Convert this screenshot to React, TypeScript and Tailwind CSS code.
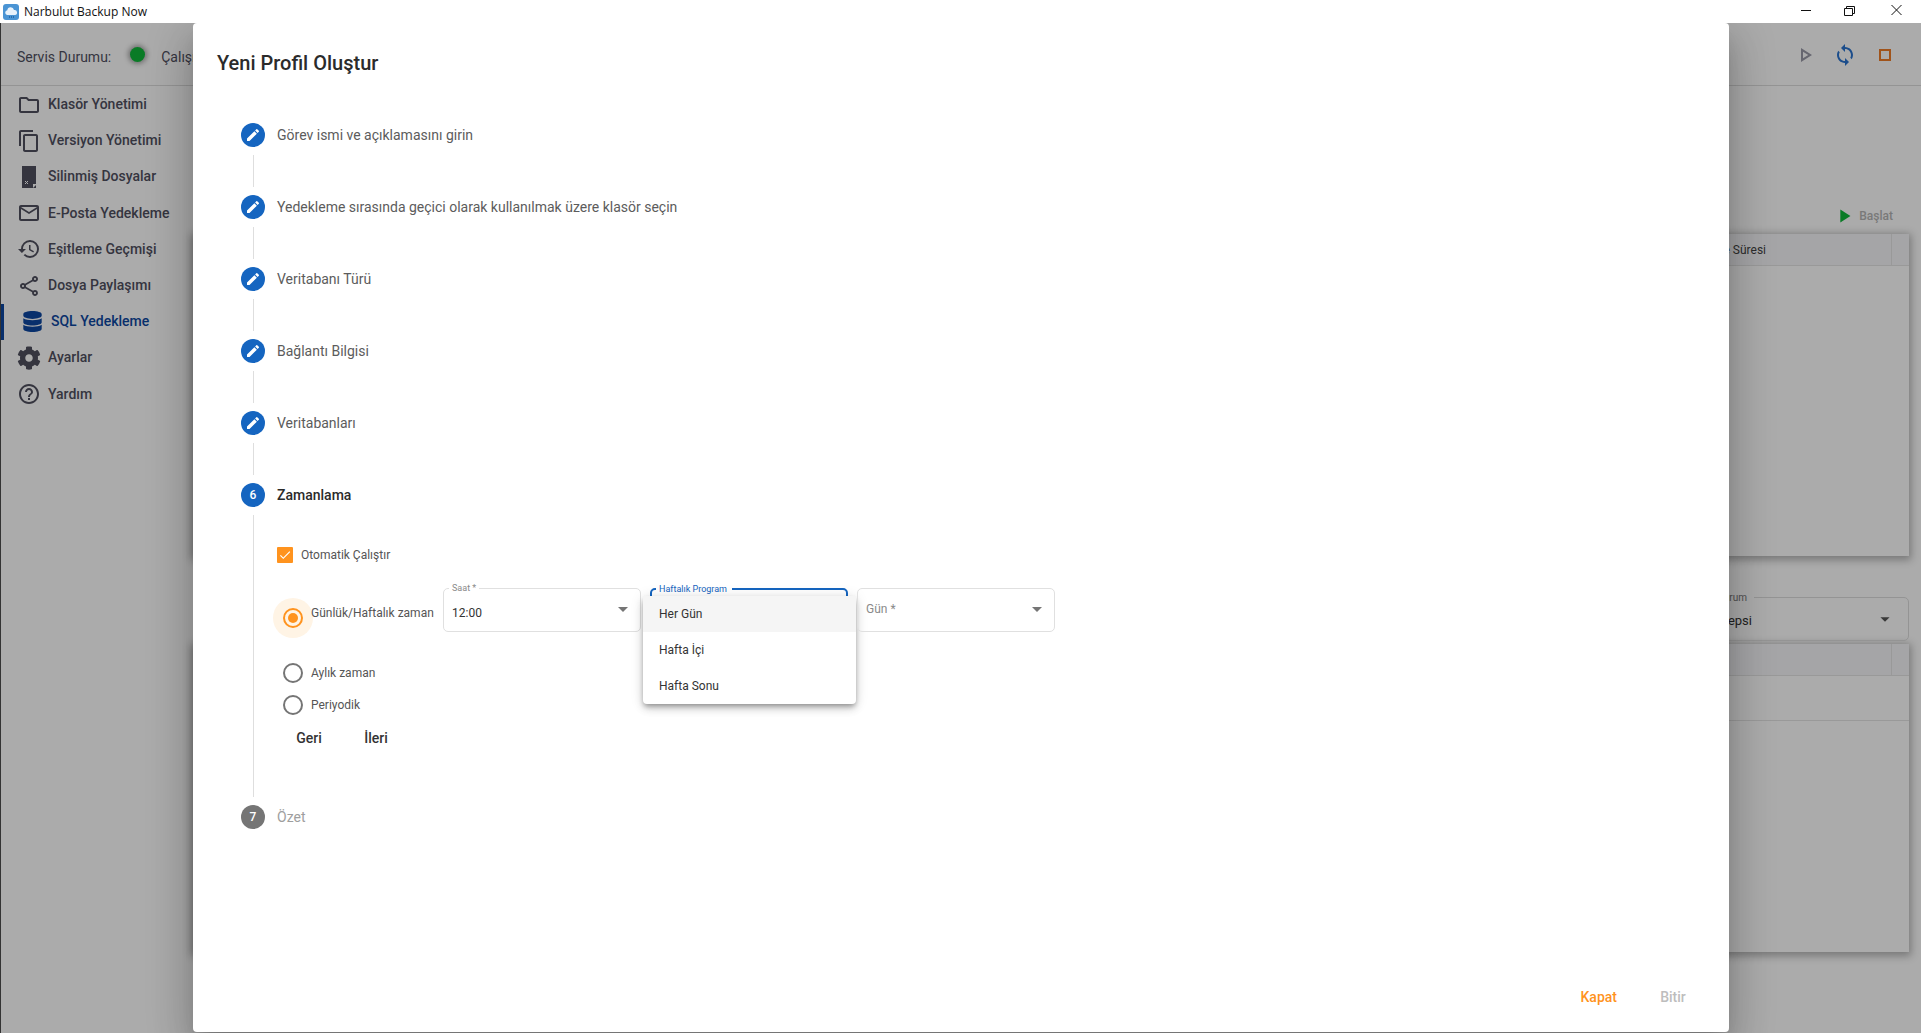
import { FaCog, FaDatabase } from "react-icons/fa";
import {
  MdArrowDropDown,
  MdCheck,
  MdContentCopy,
  MdEdit,
  MdHelpOutline,
  MdHistory,
  MdMailOutline,
  MdOutlineFolder,
  MdOutlineShare,
  MdPlayArrow,
  MdSync,
} from "react-icons/md";

function TrashFile({ className }: { className?: string }) {
  return (
    <svg viewBox="0 0 24 24" className={className}>
      <path d="M5 1h14v22H5z" fill="currentColor" />
      <path d="M8 16l3 3m0-3l-3 3" stroke="#fff" strokeWidth="1" fill="none" />
      <path d="M16 23v-4h3v1z" fill="#fff" />
    </svg>
  );
}

const NAV = [
  { label: "Klasör Yönetimi", icon: MdOutlineFolder },
  { label: "Versiyon Yönetimi", icon: MdContentCopy },
  { label: "Silinmiş Dosyalar", icon: TrashFile },
  { label: "E-Posta Yedekleme", icon: MdMailOutline },
  { label: "Eşitleme Geçmişi", icon: MdHistory },
  { label: "Dosya Paylaşımı", icon: MdOutlineShare },
  { label: "SQL Yedekleme", icon: FaDatabase, active: true },
  { label: "Ayarlar", icon: FaCog },
  { label: "Yardım", icon: MdHelpOutline },
];

const DONE_STEPS = [
  "Görev ismi ve açıklamasını girin",
  "Yedekleme sırasında geçici olarak kullanılmak üzere klasör seçin",
  "Veritabanı Türü",
  "Bağlantı Bilgisi",
  "Veritabanları",
];

function TitleBar() {
  return (
    <div className="flex h-[23px] shrink-0 items-center bg-white pl-[3px] [font-family:'Open_Sans',sans-serif] text-[12px] text-[#111]">
      <svg viewBox="0 0 16 16" className="size-4 shrink-0">
        <rect width="16" height="16" rx="3" fill="#4a94d4" />
        <path d="M4 11a2.4 2.4 0 0 1 .3-4.7A3.4 3.4 0 0 1 11 6a2.5 2.5 0 0 1 1 5z" fill="#e8f2fb" />
        <path d="M6 13h5" stroke="#1f5f9e" strokeWidth="1.4" strokeDasharray="1 1" />
      </svg>
      <span className="ml-[5px]">Narbulut Backup Now</span>
      <div className="ml-auto flex items-center">
        <svg viewBox="0 0 45 23" className="h-[23px] w-[45px]">
          <path d="M20 10.5h10" stroke="#111" fill="none" />
        </svg>
        <svg viewBox="0 0 45 23" className="h-[23px] w-[45px]">
          <path d="M18.5 8.5h8v7h-8zM20.5 8.5v-2h8v7h-2" stroke="#111" fill="none" />
        </svg>
        <svg viewBox="0 0 45 23" className="h-[23px] w-[50px]">
          <path d="M18 5l10 10M28 5L18 15" stroke="#111" fill="none" />
        </svg>
      </div>
    </div>
  );
}

function Sidebar() {
  return (
    <aside className="w-[192px] shrink-0 pt-[0.5px]">
      {NAV.map((item) => {
        const Icon = item.icon;
        return (
          <div
            key={item.label}
            className={
              item.active
                ? "flex h-[36.2px] items-center border-l-[3px] border-[#0d47a1] pl-[18px] text-[#0d47a1]"
                : "flex h-[36.2px] items-center pl-[16px] text-[#50505f]"
            }
          >
            <Icon className={item.active ? "size-[21px] shrink-0" : "size-[24px] shrink-0"} />
            <span className={item.active ? "ml-[8px] text-[14px] font-medium" : "ml-[7px] text-[14px] font-medium"}>
              {item.label}
            </span>
          </div>
        );
      })}
    </aside>
  );
}

function BackgroundApp() {
  return (
    <div className="flex h-full flex-col bg-white">
      <header className="flex h-[63px] shrink-0 items-center border-b border-[#ddd] pl-[16px] pr-[24px] pt-[3px] text-[14px] text-[#50505f]">
        <span className="mt-[3px]">Servis Durumu:</span>
        <span className="-mt-[2px] ml-[19px] size-[15px] rounded-full bg-[#0fb83a] shadow-[0_0_5px_2px_rgba(0,0,0,0.35)]" />
        <span className="ml-[16px] mt-[3px]">Çalışıyor</span>
        <div className="-mt-[1px] ml-auto flex items-center gap-[16px]">
          <svg viewBox="0 0 24 24" className="size-6 text-[#9a9aa8]">
            <path fill="currentColor" d="M10 8.64 15.27 12 10 15.36V8.64M8 5v14l11-7L8 5z" />
          </svg>
          <MdSync className="size-6 text-[#2a74d0]" />
          <svg viewBox="0 0 24 24" className="size-6 text-[#ef7c28]">
            <path fill="currentColor" d="M16 8v8H8V8h8m2-2H6v12h12V6z" />
          </svg>
        </div>
      </header>
      <div className="flex min-h-0 flex-1">
        <Sidebar />
        <main className="flex flex-1 flex-col pr-[12px] pt-[119px]">
          <div className="flex items-center justify-end pr-[16px] text-[12px] text-[#b5b5b5]">
            <MdPlayArrow className="mr-[4px] size-[22px] text-[#0fb83a]" />
            <span className="font-medium">Başlat</span>
          </div>
          <section className="mt-[7px] h-[322px] bg-white shadow-[0_2px_8px_2px_rgba(0,0,0,0.3)]">
            <div className="flex h-[32px] items-center justify-end border-b border-[#e4e4e4] bg-[#f7f7fa] text-[12px] text-[#444]">
              <span>Yedekleme Süresi</span>
              <span className="ml-[125px] h-full w-[18px] border-l border-[#e4e4e4]" />
            </div>
          </section>
          <div className="relative mt-[41px] flex h-[44px] items-center rounded-[5px] border border-[#ddd] pr-[12px] text-[13px] text-[#333]">
            <span className="absolute -top-[8px] right-[154px] bg-white pl-[4px] pr-[7px] text-[10px] text-[#777]">Durum</span>
            <span className="ml-auto mr-[122px] mt-[3px]">Hepsi</span>
            <MdArrowDropDown className="size-[22px] text-[#555]" />
          </div>
          <section className="mt-[3px] h-[308px] bg-white shadow-[0_2px_8px_2px_rgba(0,0,0,0.3)]">
            <div className="flex h-[32px] justify-end border-b border-[#e4e4e4] bg-[#f7f7fa]">
              <span className="h-full w-[18px] border-l border-[#e4e4e4]" />
            </div>
            <div className="h-[45px] border-b border-[#e4e4e4]" />
          </section>
        </main>
      </div>
    </div>
  );
}

function StepCircle({ children, muted }: { children: React.ReactNode; muted?: boolean }) {
  return (
    <span
      className={
        muted
          ? "flex size-6 shrink-0 items-center justify-center rounded-full bg-[#757575] text-[12px] font-medium text-white"
          : "flex size-6 shrink-0 items-center justify-center rounded-full bg-[#1565c0] text-[12px] font-medium text-white"
      }
    >
      {children}
    </span>
  );
}

function Radio({ checked }: { checked?: boolean }) {
  return (
    <span
      className={
        checked
          ? "flex size-[40px] shrink-0 items-center justify-center rounded-full bg-[#fff4e5]"
          : "flex size-[40px] shrink-0 items-center justify-center rounded-full"
      }
    >
      <span
        className={
          checked
            ? "flex size-[20px] items-center justify-center rounded-full border-2 border-[#ff931e]"
            : "flex size-[20px] items-center justify-center rounded-full border-2 border-[#757575]"
        }
      >
        {checked && <span className="size-[10px] rounded-full bg-[#ff931e]" />}
      </span>
    </span>
  );
}

function OutlinedSelect({ label, value }: { label: string; value?: string }) {
  return (
    <div className="relative flex h-[44px] w-[198px] shrink-0 items-center rounded-[5px] border border-[#e0e0e0] pl-[8px] pr-[5px] text-[12px]">
      {value ? (
        <>
          <span className="absolute -top-[7px] left-[5px] bg-white px-[3px] text-[9px] text-[#8a8a8a]">{label}</span>
          <span className="mt-[6px] text-[#333]">{value}</span>
        </>
      ) : (
        <span className="-mt-[2px] text-[#8a8a8a]">{label}</span>
      )}
      <MdArrowDropDown className="-mt-[2px] ml-auto size-[24px] text-[#757575]" />
    </div>
  );
}

function WeeklySelect() {
  return (
    <div className="relative h-[44px] w-[198px] shrink-0 rounded-[5px] border-2 border-[#1565c0]">
      <span className="absolute -top-[8px] left-[4px] bg-white pl-[3px] pr-[5px] text-[9px] leading-[14px] text-[#1565c0]">
        Haftalık Program
      </span>
      <div className="absolute -left-[9px] top-[6px] w-[213px] rounded-[4px] bg-white text-[12px] text-[#333] shadow-[0_3px_5px_-1px_rgba(0,0,0,0.3),0_5px_8px_0_rgba(0,0,0,0.14),0_1px_14px_0_rgba(0,0,0,0.12)]">
        <div className="flex h-[36px] items-center bg-[#f5f5f5] pl-[16px]">Her Gün</div>
        <div className="flex h-[36px] items-center pl-[16px]">Hafta İçi</div>
        <div className="flex h-[36px] items-center pl-[16px]">Hafta Sonu</div>
      </div>
    </div>
  );
}

function ScheduleStep() {
  return (
    <div className="my-2 ml-3 h-[282px] border-l border-[#dedede] pl-[23px] pt-[32px] text-[12px] text-[#555]">
      <div className="flex h-[16px] items-center">
        <span className="flex size-[16px] items-center justify-center rounded-[1px] bg-[#ff931e]">
          <MdCheck className="size-[14px] text-white" />
        </span>
        <span className="ml-[8px]">Otomatik Çalıştır</span>
      </div>
      <div className="mt-[25px] flex items-start">
        <div className="-ml-[4px] mt-[10px]">
          <Radio checked />
        </div>
        <span className="-ml-[2px] mr-[10px] mt-[16px] w-[122px] whitespace-nowrap leading-[18px]">
          Günlük/Haftalık zaman
        </span>
        <div className="flex gap-[9px]">
          <OutlinedSelect label="Saat *" value="12:00" />
          <WeeklySelect />
          <OutlinedSelect label="Gün *" />
        </div>
      </div>
      <div className="-ml-[4px] mt-[19px] flex h-[32px] items-center">
        <Radio />
        <span className="-ml-[2px]">Aylık zaman</span>
      </div>
      <div className="-ml-[4px] flex h-[32px] items-center">
        <Radio />
        <span className="-ml-[2px]">Periyodik</span>
      </div>
      <div className="-mt-px flex gap-[3px] text-[14px] font-medium text-[#333]">
        <span className="flex h-[36px] w-[64px] items-center justify-center">Geri</span>
        <span className="flex h-[36px] w-[64px] items-center justify-center">İleri</span>
      </div>
    </div>
  );
}

function Modal() {
  return (
    <div className="absolute bottom-[1px] left-[192px] top-0 flex w-[1536px] flex-col rounded-[4px] bg-white shadow-[0_11px_15px_-7px_rgba(0,0,0,0.2),0_24px_38px_3px_rgba(0,0,0,0.14),0_9px_46px_8px_rgba(0,0,0,0.12)]">
      <h2 className="px-6 pt-[27px] text-[20px] font-medium leading-[26px] text-[#2b2b2b]">Yeni Profil Oluştur</h2>
      <div className="px-12 pt-[47px]">
        {DONE_STEPS.map((label) => (
          <div key={label}>
            <div className="flex h-6 items-center">
              <StepCircle>
                <MdEdit className="size-[16px]" />
              </StepCircle>
              <span className="ml-3 text-[14px] text-[#5c5c5c]">{label}</span>
            </div>
            <div className="my-2 ml-3 h-[32px] border-l border-[#dedede]" />
          </div>
        ))}
        <div className="flex h-6 items-center">
          <StepCircle>6</StepCircle>
          <span className="ml-3 text-[14px] font-medium text-[#2b2b2b]">Zamanlama</span>
        </div>
        <ScheduleStep />
        <div className="flex h-6 items-center">
          <StepCircle muted>7</StepCircle>
          <span className="ml-3 text-[14px] text-[#9e9e9e]">Özet</span>
        </div>
      </div>
      <div className="mt-auto flex justify-end gap-2 pb-[17px] pr-6 text-[14px] font-medium">
        <span className="flex h-[36px] items-center px-4 text-[#ff931e]">Kapat</span>
        <span className="flex h-[36px] min-w-[64px] items-center justify-center px-4 text-[#bdbdbd]">Bitir</span>
      </div>
    </div>
  );
}

export default function App() {
  return (
    <div className="flex h-screen w-full flex-col overflow-hidden bg-white [font-family:Roboto,sans-serif]">
      <TitleBar />
      <div className="relative min-h-0 flex-1 overflow-hidden border-l border-[#333]">
        <BackgroundApp />
        <div className="absolute inset-0 bg-black/[0.33]" />
        <Modal />
      </div>
    </div>
  );
}
